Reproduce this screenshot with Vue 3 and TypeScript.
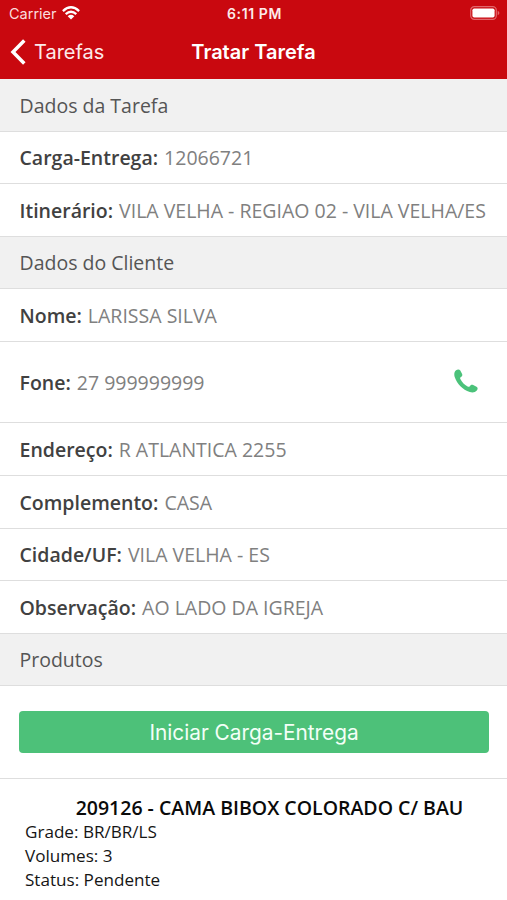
<script setup lang="ts">
interface Field {
  label: string
  value: string
  phone?: boolean
}

interface Section {
  title: string
  fields: Field[]
}

const sections: Section[] = [
  {
    title: 'Dados da Tarefa',
    fields: [
      { label: 'Carga-Entrega:', value: '12066721' },
      { label: 'Itinerário:', value: 'VILA VELHA - REGIAO 02 - VILA VELHA/ES' },
    ],
  },
  {
    title: 'Dados do Cliente',
    fields: [
      { label: 'Nome:', value: 'LARISSA SILVA' },
      { label: 'Fone:', value: '27 999999999', phone: true },
      { label: 'Endereço:', value: 'R ATLANTICA 2255' },
      { label: 'Complemento:', value: 'CASA' },
      { label: 'Cidade/UF:', value: 'VILA VELHA - ES' },
      { label: 'Observação:', value: 'AO LADO DA IGREJA' },
    ],
  },
  { title: 'Produtos', fields: [] },
]

const product = {
  name: '209126 - CAMA BIBOX COLORADO C/ BAU',
  details: ['Grade: BR/BR/LS', 'Volumes: 3', 'Status: Pendente'],
}
</script>

<template>
  <div class="screen">
    <header class="header">
      <div class="status">
        <div class="carrier">
          <span>Carrier</span>
          <svg class="wifi" viewBox="0 0 18 14" fill="none">
            <path d="M.9 5.1Q9-2.5 17.1 5.1M3.7 8.2Q9 3.3 14.3 8.2" stroke="#fff" stroke-width="2.3" />
            <path d="M5.7 10.2Q9 7.4 12.3 10.2L9 13.5Z" fill="#fff" />
          </svg>
        </div>
        <span class="time">6:11 PM</span>
        <svg class="battery" viewBox="0 0 30 14" fill="none">
          <rect x="0.7" y="0.7" width="25.6" height="12.6" rx="3.6" stroke="#e1666b" stroke-width="1.2" />
          <rect x="2.4" y="2.4" width="22.2" height="9.2" rx="1.8" fill="#fff" />
          <path d="M27.7 4.7Q29.4 5.5 29.4 7T27.7 9.3Z" fill="#e1666b" />
        </svg>
      </div>
      <nav class="nav">
        <div class="back">
          <svg class="chevron" viewBox="0 0 16 26" fill="none">
            <path d="M14.3 1.5L3 13L14.3 24.5" stroke="#fff" stroke-width="3.5" />
          </svg>
          <span>Tarefas</span>
        </div>
        <h1 class="title">Tratar Tarefa</h1>
      </nav>
    </header>

    <main>
      <section v-for="section in sections" :key="section.title">
        <h2 class="row heading">{{ section.title }}</h2>
        <div v-for="field in section.fields" :key="field.label" class="row" :class="{ tall: field.phone }">
          <span class="label">{{ field.label }}</span>
          <span class="value">{{ field.value }}</span>
          <svg v-if="field.phone" class="phone" viewBox="0 0 24 24">
            <path
              d="M2.1 1.3C3.5.1 5.4.1 6.3 1.6L8 4.7C8.8 6.3 8.2 7.1 6.6 8.3C6 8.8 6 9.4 6.5 10.3C8.3 13.5 10.3 15.7 13.6 17.5C14.5 18 15.1 18 15.6 17.4C16.7 15.8 17.6 15.2 19.2 16L22.5 17.8C24 18.7 23.9 20.2 22.8 21.6C21.2 23.5 18.5 24 15.8 23.1C8.6 20.5 3.1 15 .7 8C-.1 5.4.2 2.9 2.1 1.3Z"
              fill="#4bc27a"
            />
          </svg>
        </div>
      </section>

      <div class="action">
        <button class="button" type="button">Iniciar Carga-Entrega</button>
      </div>

      <article class="product">
        <h3 class="product-name">{{ product.name }}</h3>
        <p v-for="detail in product.details" :key="detail" class="detail">{{ detail }}</p>
      </article>
    </main>
  </div>
</template>

<style>
body {
  margin: 0;
  background: #fff;
}
</style>

<style scoped>
.screen {
  height: 900px;
  overflow: hidden;
  background: #fff;
  font-family: 'Open Sans', sans-serif;
}

.header {
  box-sizing: border-box;
  height: 79px;
  background: #c9080f;
  color: #fff;
  font-family: Inter, sans-serif;
}

.status {
  display: grid;
  grid-template-columns: 1fr auto 1fr;
  align-items: center;
  height: 27px;
  padding: 0 7px 0 9px;
}

.carrier {
  display: flex;
  align-items: center;
  gap: 5.5px;
  color: #fbdcdd;
  font-size: 14.5px;
}

.wifi {
  width: 18px;
  height: 14px;
  margin-bottom: 1px;
}

.time {
  color: #fdeaea;
  font-size: 14px;
  font-weight: 600;
  letter-spacing: 0.6px;
}

.battery {
  justify-self: end;
  width: 30px;
  height: 14px;
  margin-bottom: 1px;
}

.nav {
  display: grid;
  grid-template-columns: 1fr auto 1fr;
  align-items: center;
  height: 50.5px;
  padding: 0 10px;
}

.back {
  display: flex;
  align-items: center;
  gap: 8px;
  color: #fdeaea;
  font-size: 20px;
}

.chevron {
  width: 16px;
  height: 26px;
}

.title {
  margin: 0;
  font-size: 20px;
  font-weight: 600;
}

.row {
  display: flex;
  align-items: center;
  box-sizing: border-box;
  height: 52.6px;
  margin: 0;
  padding: 0.5px 20px 0 19.5px;
  border-bottom: 1px solid #dedede;
  color: #414141;
  font-size: 19.5px;
  font-weight: 400;
  white-space: nowrap;
}

.heading {
  background: #f1f1f1;
  color: #555;
}

.tall {
  height: 81.4px;
}

.label {
  font-weight: 600;
}

.value {
  margin-left: 6px;
  color: #808080;
  font-size: 19.5px;
}

.phone {
  width: 24px;
  height: 24px;
  margin: 0 9px 3px auto;
}

.action {
  box-sizing: border-box;
  height: 92.4px;
  padding: 24.4px 18px 0 19px;
  border-bottom: 1px solid #dedede;
}

.button {
  display: block;
  width: 100%;
  height: 42.4px;
  padding: 2px 0 0;
  border: 0;
  border-radius: 4px;
  background: #4dc179;
  color: #f3fff7;
  font-family: Inter, sans-serif;
  font-size: 20.8px;
}

.product {
  padding: 16px 25px 0;
  color: #151515;
}

.product-name {
  margin: 0 0 0 32px;
  color: #0a0a0a;
  font-size: 19.5px;
  font-weight: 600;
  line-height: 25.6px;
  text-align: center;
  white-space: nowrap;
}

.detail {
  margin: 0;
  font-size: 17.1px;
  line-height: 23.8px;
}
</style>
